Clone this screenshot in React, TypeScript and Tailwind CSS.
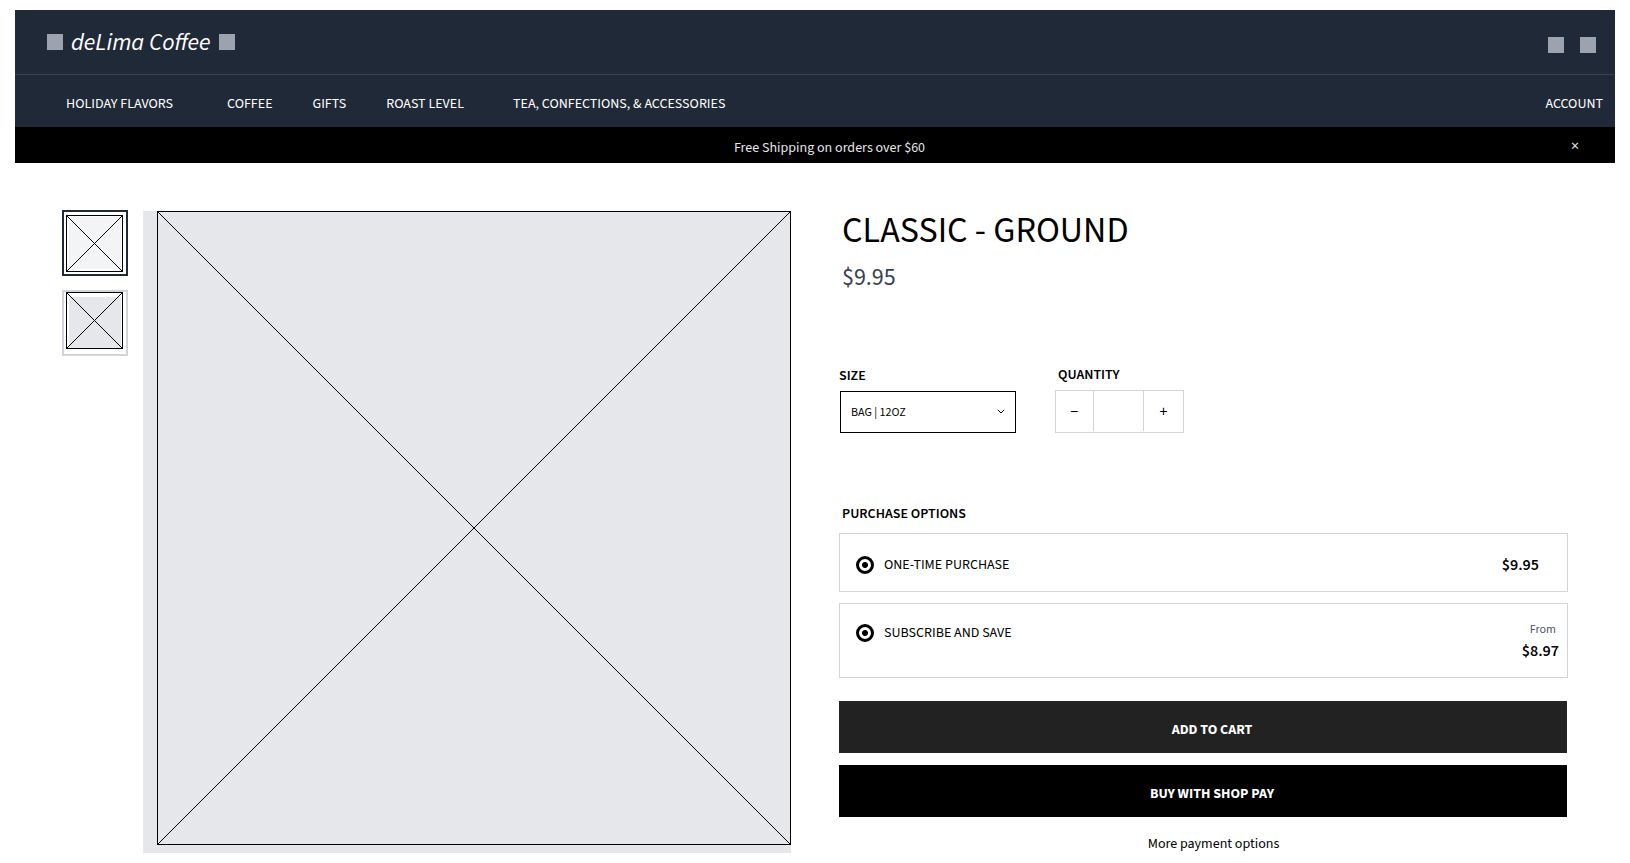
import { useState } from "react";

const navLinks = [
  { label: "HOLIDAY FLAVORS", gap: "mr-[54px]" },
  { label: "COFFEE", gap: "mr-10" },
  { label: "GIFTS", gap: "mr-10" },
  { label: "ROAST LEVEL", gap: "mr-[49px]" },
  { label: "TEA, CONFECTIONS, & ACCESSORIES", gap: "" },
];

function Crossed({ className, children }: { className: string; children?: React.ReactNode }) {
  return (
    <svg className={`block border border-black ${className}`} aria-hidden="true" shapeRendering="crispEdges" stroke="#000">
      {children}
      <line x1="0" y1="0" x2="100%" y2="100%" />
      <line x1="0" y1="100%" x2="100%" y2="0" />
    </svg>
  );
}

function Header() {
  return (
    <header className="bg-[#1f2937] text-white">
      <div className="flex h-16 items-center justify-between pl-8 pr-[19px]">
        <a href="#" className="flex items-center gap-2">
          <span className="size-4 bg-[#9ca3af]" />
          <span className="pt-0.5 text-2xl italic">deLima Coffee</span>
          <span className="size-4 bg-[#9ca3af]" />
        </a>
        <div className="flex gap-4 pt-1.5">
          <button aria-label="Search" className="size-4 bg-[#9ca3af]" />
          <button aria-label="Cart" className="size-4 bg-[#9ca3af]" />
        </div>
      </div>
      <nav className="flex h-[53px] items-center border-t border-[#374151] pl-[51px] pr-3 pt-1.5 text-sm">
        {navLinks.map((link) => (
          <a key={link.label} href="#" className={link.gap}>
            {link.label}
          </a>
        ))}
        <a href="#" className="ml-auto">ACCOUNT</a>
      </nav>
    </header>
  );
}

function Option({ label, name, children, className }: { label: string; name: string; children: React.ReactNode; className: string }) {
  return (
    <div className={`flex justify-between border border-[#d1d5db] pl-4 ${className}`}>
      <label className="flex h-5 items-center gap-[10px] text-sm">
        <input
          type="radio"
          name={name}
          defaultChecked
          className="size-[18px] appearance-none rounded-full border-[3px] border-black bg-white checked:bg-[radial-gradient(circle,#000_0,#000_2.5px,transparent_3.5px)]"
        />
        {label}
      </label>
      {children}
    </div>
  );
}

export default function App() {
  const [quantity, setQuantity] = useState("");
  const step = (delta: number) => setQuantity(String(Math.max(1, (Number(quantity) || 0) + delta)));

  return (
    <div className="bg-white px-[15px] py-[10px] font-['Source_Sans_3','Source_Sans_Pro','Noto_Sans_CJK_SC',sans-serif] text-black">
      <Header />
      <div className="flex h-9 items-center bg-black pl-[75px] pr-[34px] pt-0.5 text-sm text-[#e5e7eb]">
        <p className="flex-1 pt-1 text-center">Free Shipping on orders over $60</p>
        <button aria-label="Dismiss" className="w-3 text-base">×</button>
      </div>

      <main className="grid grid-cols-[66px_minmax(0,663fr)_minmax(0,777fr)] items-start px-[47px] pt-12">
        <div className="-mt-px flex flex-col gap-[14px]">
          <button aria-label="Front view" className="flex size-[66px] justify-center border-2 border-[#1f2937] pt-[3px] pr-[1px]">
            <Crossed className="size-[57px]">
              <rect x="2" y="1" width="52" height="52" className="fill-[#f3f4f6] stroke-none" />
            </Crossed>
          </button>
          <button aria-label="Back view" className="flex size-[66px] justify-center border-2 border-[#d1d5db] pr-[1px]">
            <Crossed className="size-[57px]">
              <rect x="2" y="4" width="52" height="51" className="fill-[#e5e7eb] stroke-none" />
            </Crossed>
          </button>
        </div>

        <div className="ml-[15px] bg-[#e5e7eb] pb-2 pl-[14px]">
          <Crossed className="aspect-square w-full" />
        </div>

        <section className="pl-12">
          <h1 className="pl-[3px] text-4xl leading-10">CLASSIC - GROUND</h1>
          <p className="pl-[3px] pt-[11px] text-2xl leading-8 text-[#374151]">$9.95</p>

          <div className="flex items-end gap-[39px] pt-[71px]">
            <div>
              <label htmlFor="size" className="block text-sm font-semibold leading-5">SIZE</label>
              <div className="relative ml-px mt-[5px]">
                <select id="size" className="block h-[42px] w-44 appearance-none border border-black bg-white px-[10px] pt-0.5 text-xs">
                  <option>BAG | 12OZ</option>
                </select>
                <svg className="pointer-events-none absolute right-[11px] top-[18px]" width="8" height="5" viewBox="0 0 8 5" fill="none" aria-hidden="true">
                  <path d="M.8 .8L4 4L7.2 .8" stroke="#000" />
                </svg>
              </div>
            </div>
            <div>
              <label htmlFor="quantity" className="block pl-[3px] text-sm font-semibold leading-5">QUANTITY</label>
              <div className="mt-[5px] flex h-[43px] w-[129px] border border-[#d1d5db]">
                <button aria-label="Decrease" onClick={() => step(-1)} className="w-[37px] text-base">−</button>
                <input
                  id="quantity"
                  value={quantity}
                  onChange={(e) => setQuantity(e.target.value)}
                  className="mb-px min-w-0 flex-1 border-x border-[#d1d5db] text-center text-sm"
                />
                <button aria-label="Increase" onClick={() => step(1)} className="w-[39px] text-base">+</button>
              </div>
            </div>
          </div>

          <h2 className="pb-[9px] pl-[3px] pt-[71px] text-sm font-semibold leading-5">PURCHASE OPTIONS</h2>
          <Option name="one-time" label="ONE-TIME PURCHASE" className="h-[59px] items-center pr-7 pt-1">
            <span className="text-base font-semibold">$9.95</span>
          </Option>
          <Option name="subscribe" label="SUBSCRIBE AND SAVE" className="mt-[11px] h-[75px] pr-2 pt-[19px]">
            <p className="flex flex-col pt-px">
              <span className="pr-[3px] text-right text-xs leading-3 text-[#4b5563]">From</span>
              <span className="pt-[3px] text-base font-semibold leading-6">$8.97</span>
            </p>
          </Option>

          <div className="mt-[23px] flex flex-col gap-3 pr-px text-sm font-bold text-white">
            <button className="h-[52px] bg-[#222222] pl-[18px] pt-1.5">ADD TO CART</button>
            <button className="h-[52px] bg-black pl-[18px] pt-1.5">BUY WITH SHOP PAY</button>
          </div>
          <a href="#" className="block pl-5 pt-[17px] text-center text-sm">More payment options</a>
        </section>
      </main>
    </div>
  );
}
